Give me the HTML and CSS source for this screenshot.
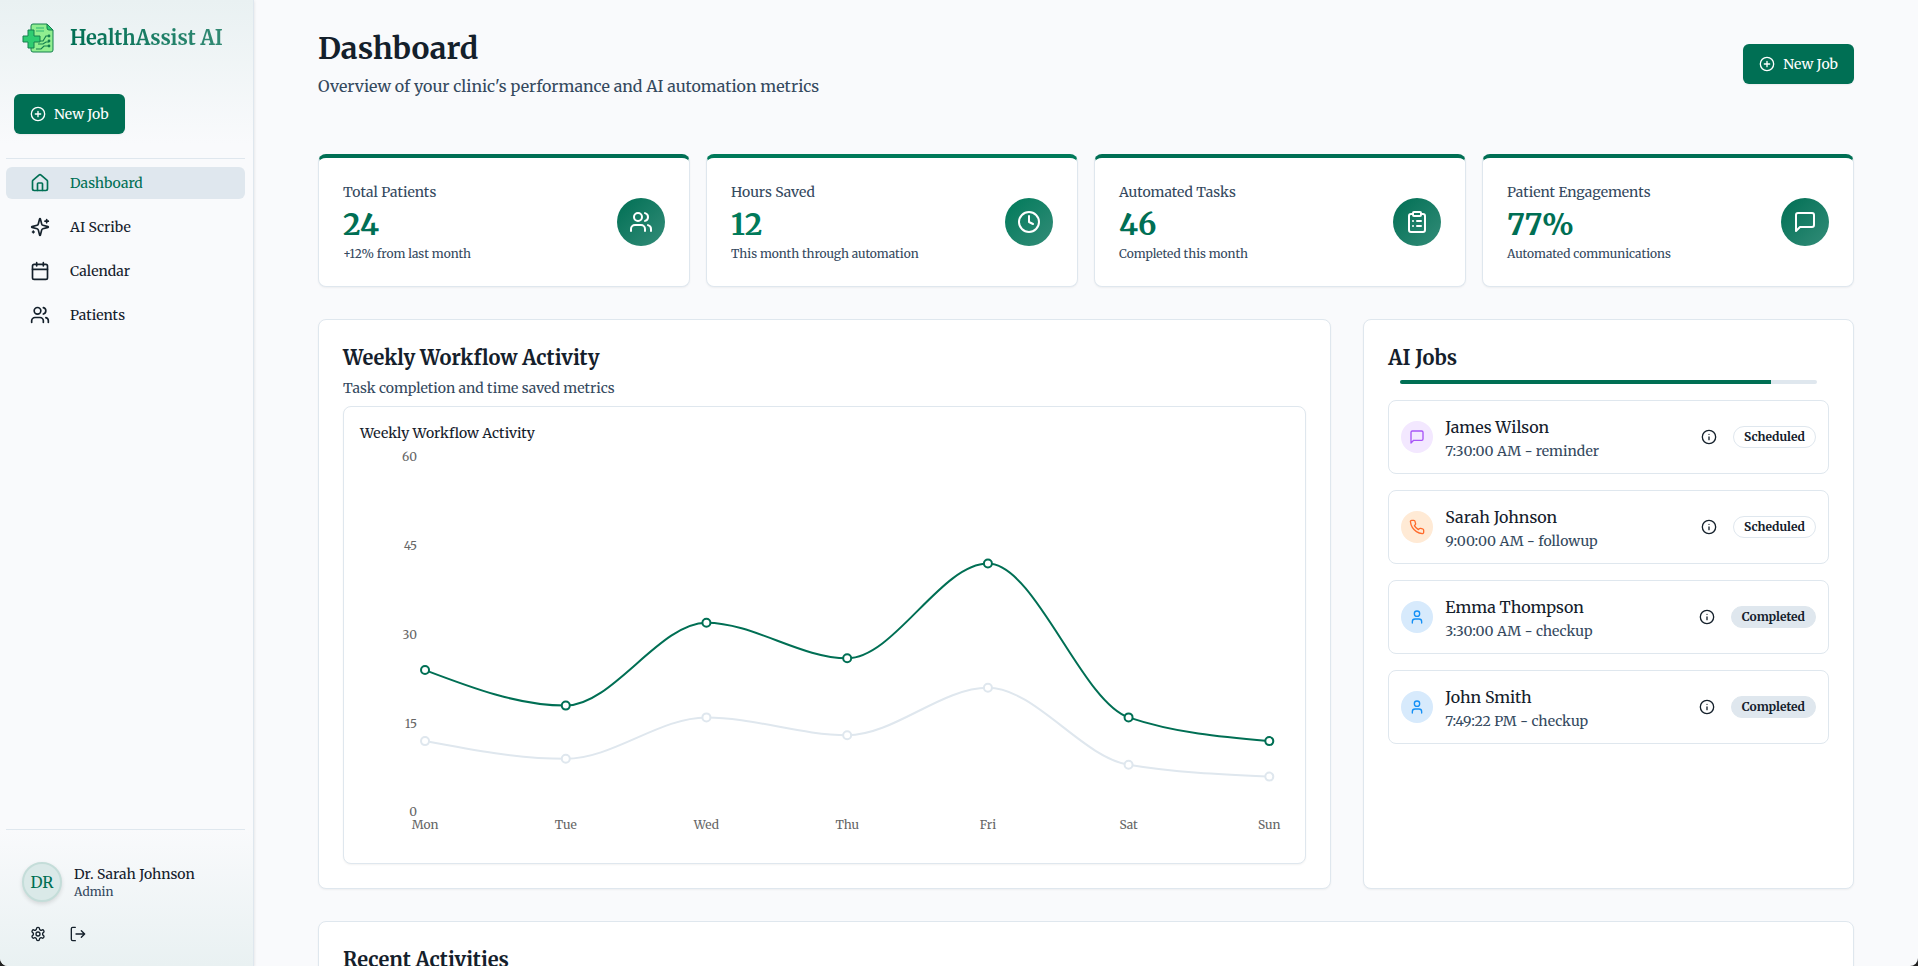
FILE: index.html
```html
<!DOCTYPE html>
<html lang="en">
<head>
  <meta charset="UTF-8">
  <meta name="viewport" content="width=device-width, initial-scale=1.0">
  <title>HealthAssist AI - Dashboard</title>
  <link rel="stylesheet" href="styles.css">
</head>
<body>
  <!-- icon sprite -->
  <svg class="sprite" aria-hidden="true">
    <symbol id="plus-circle" viewBox="0 0 24 24"><circle cx="12" cy="12" r="10"/><path d="M8 12h8M12 8v8"/></symbol>
    <symbol id="house" viewBox="0 0 24 24"><path d="M15 21v-8a1 1 0 0 0-1-1h-4a1 1 0 0 0-1 1v8"/><path d="M3 10a2 2 0 0 1 .709-1.528l7-5.999a2 2 0 0 1 2.582 0l7 5.999A2 2 0 0 1 21 10v9a2 2 0 0 1-2 2H5a2 2 0 0 1-2-2z"/></symbol>
    <symbol id="sparkles" viewBox="0 0 24 24"><path d="M9.937 15.5A2 2 0 0 0 8.5 14.063l-6.135-1.582a.5.5 0 0 1 0-.962L8.5 9.936A2 2 0 0 0 9.937 8.5l1.582-6.135a.5.5 0 0 1 .963 0L14.063 8.5A2 2 0 0 0 15.5 9.937l6.135 1.581a.5.5 0 0 1 0 .964L15.5 14.063a2 2 0 0 0-1.437 1.437l-1.582 6.135a.5.5 0 0 1-.963 0z"/><path d="M20 3v4M22 5h-4M4 17v2M5 18H3"/></symbol>
    <symbol id="calendar" viewBox="0 0 24 24"><path d="M8 2v4M16 2v4"/><rect width="18" height="18" x="3" y="4" rx="2"/><path d="M3 10h18"/></symbol>
    <symbol id="users" viewBox="0 0 24 24"><path d="M16 21v-2a4 4 0 0 0-4-4H6a4 4 0 0 0-4 4v2"/><circle cx="9" cy="7" r="4"/><path d="M22 21v-2a4 4 0 0 0-3-3.87M16 3.13a4 4 0 0 1 0 7.75"/></symbol>
    <symbol id="user" viewBox="0 0 24 24"><path d="M19 21v-2a4 4 0 0 0-4-4H9a4 4 0 0 0-4 4v2"/><circle cx="12" cy="7" r="4"/></symbol>
    <symbol id="clock" viewBox="0 0 24 24"><circle cx="12" cy="12" r="10"/><path d="M12 6v6l4 2"/></symbol>
    <symbol id="clipboard" viewBox="0 0 24 24"><rect width="8" height="4" x="8" y="2" rx="1"/><path d="M16 4h2a2 2 0 0 1 2 2v14a2 2 0 0 1-2 2H6a2 2 0 0 1-2-2V6a2 2 0 0 1 2-2h2M12 11h4M12 16h4M8 11h.01M8 16h.01"/></symbol>
    <symbol id="message" viewBox="0 0 24 24"><path d="M21 15a2 2 0 0 1-2 2H7l-4 4V5a2 2 0 0 1 2-2h14a2 2 0 0 1 2 2z"/></symbol>
    <symbol id="phone" viewBox="0 0 24 24"><path d="M22 16.92v3a2 2 0 0 1-2.18 2 19.79 19.79 0 0 1-8.63-3.07 19.5 19.5 0 0 1-6-6 19.79 19.79 0 0 1-3.07-8.67A2 2 0 0 1 4.11 2h3a2 2 0 0 1 2 1.72 12.84 12.84 0 0 0 .7 2.81 2 2 0 0 1-.45 2.11L8.09 9.91a16 16 0 0 0 6 6l1.27-1.27a2 2 0 0 1 2.11-.45 12.84 12.84 0 0 0 2.81.7A2 2 0 0 1 22 16.92z"/></symbol>
    <symbol id="info" viewBox="0 0 24 24"><circle cx="12" cy="12" r="10"/><path d="M12 16v-4M12 8h.01"/></symbol>
    <symbol id="settings" viewBox="0 0 24 24"><path d="M12.22 2h-.44a2 2 0 0 0-2 2v.18a2 2 0 0 1-1 1.73l-.43.25a2 2 0 0 1-2 0l-.15-.08a2 2 0 0 0-2.73.73l-.22.38a2 2 0 0 0 .73 2.73l.15.1a2 2 0 0 1 1 1.72v.51a2 2 0 0 1-1 1.74l-.15.09a2 2 0 0 0-.73 2.73l.22.38a2 2 0 0 0 2.73.73l.15-.08a2 2 0 0 1 2 0l.43.25a2 2 0 0 1 1 1.73V20a2 2 0 0 0 2 2h.44a2 2 0 0 0 2-2v-.18a2 2 0 0 1 1-1.73l.43-.25a2 2 0 0 1 2 0l.15.08a2 2 0 0 0 2.73-.73l.22-.39a2 2 0 0 0-.73-2.73l-.15-.08a2 2 0 0 1-1-1.74v-.5a2 2 0 0 1 1-1.74l.15-.09a2 2 0 0 0 .73-2.73l-.22-.38a2 2 0 0 0-2.73-.73l-.15.08a2 2 0 0 1-2 0l-.43-.25a2 2 0 0 1-1-1.73V4a2 2 0 0 0-2-2z"/><circle cx="12" cy="12" r="3"/></symbol>
    <symbol id="logout" viewBox="0 0 24 24"><path d="M8 22H4a2 2 0 0 1-2-2V4a2 2 0 0 1 2-2h4M17 17l5-5-5-5M22 12H9"/></symbol>
  </svg>

  <div class="app">
    <aside class="sidebar">
      <div class="sidebar-header">
        <div class="brand">
          <svg class="logo" viewBox="0 0 32 32" aria-hidden="true">
            <path d="M11 2h14l6 6v20a2 2 0 0 1-2 2H11a2 2 0 0 1-2-2V4a2 2 0 0 1 2-2z" fill="#90ee90" stroke="#14804f"/>
            <path d="M25 2v4a2 2 0 0 0 2 2h4z" fill="#2ecc71" stroke="#14804f"/>
            <path d="M14 6h8M14 9h8" fill="none" stroke="#2fb574" stroke-width="1.2"/>
            <path d="M18 19h3l3-5h3M16 22h5l3-2h3M14 27h5l3-3h5" fill="none" stroke="#14804f" stroke-width="1.2"/>
            <circle cx="27" cy="14" r="1.4" fill="#14804f"/><circle cx="27" cy="19" r="1.4" fill="#14804f"/><circle cx="27" cy="24" r="1.4" fill="#14804f"/>
            <path d="M6 8h6v6h6v6h-6v6H6v-6H1v-6h5z" fill="#2ecc71" stroke="#14804f"/>
          </svg>
          <span class="brand-name">HealthAssist AI</span>
        </div>
        <button class="btn" type="button"><svg class="icon"><use href="#plus-circle"/></svg>New Job</button>
      </div>

      <nav class="nav">
        <a class="nav-link active" href="#"><svg class="icon"><use href="#house"/></svg>Dashboard</a>
        <a class="nav-link" href="#"><svg class="icon"><use href="#sparkles"/></svg>AI Scribe</a>
        <a class="nav-link" href="#"><svg class="icon"><use href="#calendar"/></svg>Calendar</a>
        <a class="nav-link" href="#"><svg class="icon"><use href="#users"/></svg>Patients</a>
      </nav>

      <div class="sidebar-footer">
        <div class="profile">
          <div class="avatar">DR</div>
          <div>
            <div class="profile-name">Dr. Sarah Johnson</div>
            <div class="profile-role">Admin</div>
          </div>
        </div>
        <div class="profile-actions">
          <button class="icon-btn" type="button" aria-label="Settings"><svg class="icon"><use href="#settings"/></svg></button>
          <button class="icon-btn" type="button" aria-label="Log out"><svg class="icon"><use href="#logout"/></svg></button>
        </div>
      </div>
    </aside>

    <main class="main">
      <header class="page-header">
        <div>
          <h1>Dashboard</h1>
          <p>Overview of your clinic's performance and AI automation metrics</p>
        </div>
        <button class="btn" type="button"><svg class="icon"><use href="#plus-circle"/></svg>New Job</button>
      </header>

      <section class="stats">
        <div class="card stat">
          <div>
            <div class="stat-label">Total Patients</div>
            <div class="stat-value">24</div>
            <div class="stat-note">+12% from last month</div>
          </div>
          <div class="stat-icon"><svg class="icon"><use href="#users"/></svg></div>
        </div>
        <div class="card stat stat-light">
          <div>
            <div class="stat-label">Hours Saved</div>
            <div class="stat-value">12</div>
            <div class="stat-note">This month through automation</div>
          </div>
          <div class="stat-icon"><svg class="icon"><use href="#clock"/></svg></div>
        </div>
        <div class="card stat">
          <div>
            <div class="stat-label">Automated Tasks</div>
            <div class="stat-value">46</div>
            <div class="stat-note">Completed this month</div>
          </div>
          <div class="stat-icon"><svg class="icon"><use href="#clipboard"/></svg></div>
        </div>
        <div class="card stat">
          <div>
            <div class="stat-label">Patient Engagements</div>
            <div class="stat-value">77%</div>
            <div class="stat-note">Automated communications</div>
          </div>
          <div class="stat-icon"><svg class="icon"><use href="#message"/></svg></div>
        </div>
      </section>

      <section class="panels">
        <div class="card panel panel-wide">
          <h2>Weekly Workflow Activity</h2>
          <p class="panel-desc">Task completion and time saved metrics</p>
          <div class="card chart-box">
            <h3>Weekly Workflow Activity</h3>
            <svg class="chart" viewBox="0 0 929 404" role="img" aria-label="Weekly workflow line chart">
              <g class="axis axis-y">
                <text x="57" y="18">60</text>
                <text x="57" y="107">45</text>
                <text x="57" y="196">30</text>
                <text x="57" y="285">15</text>
                <text x="57" y="373">0</text>
              </g>
              <g class="axis axis-x">
                <text x="65" y="386">Mon</text>
                <text x="205.7" y="386">Tue</text>
                <text x="346.3" y="386">Wed</text>
                <text x="487" y="386">Thu</text>
                <text x="627.7" y="386">Fri</text>
                <text x="768.3" y="386">Sat</text>
                <text x="909" y="386">Sun</text>
              </g>
              <g class="series series-tasks">
                <path d="M65 227C111.9 244.8 158.8 262.5 205.7 262.5C252.6 262.5 299.4 179.7 346.3 179.7C393.2 179.7 440.1 215.2 487 215.2C533.9 215.2 580.8 120.5 627.7 120.5C674.6 120.5 721.4 258.5 768.3 274.3C815.2 290.1 862.1 294 909 298"/>
                <circle cx="65" cy="227" r="4"/><circle cx="205.7" cy="262.5" r="4"/><circle cx="346.3" cy="179.7" r="4"/><circle cx="487" cy="215.2" r="4"/><circle cx="627.7" cy="120.5" r="4"/><circle cx="768.3" cy="274.3" r="4"/><circle cx="909" cy="298" r="4"/>
              </g>
              <g class="series series-time">
                <path d="M65 298C111.9 306.9 158.8 315.7 205.7 315.7C252.6 315.7 299.4 274.3 346.3 274.3C393.2 274.3 440.1 292.1 487 292.1C533.9 292.1 580.8 244.7 627.7 244.7C674.6 244.7 721.4 313.8 768.3 321.7C815.2 329.6 862.1 331.5 909 333.5"/>
                <circle cx="65" cy="298" r="4"/><circle cx="205.7" cy="315.7" r="4"/><circle cx="346.3" cy="274.3" r="4"/><circle cx="487" cy="292.1" r="4"/><circle cx="627.7" cy="244.7" r="4"/><circle cx="768.3" cy="321.7" r="4"/><circle cx="909" cy="333.5" r="4"/>
              </g>
            </svg>
          </div>
        </div>

        <div class="card panel">
          <h2>AI Jobs</h2>
          <div class="progress"><div class="progress-bar" style="width: 89%"></div></div>
          <ul class="jobs">
            <li class="job">
              <span class="job-icon purple"><svg class="icon"><use href="#message"/></svg></span>
              <div class="job-text">
                <div class="job-name">James Wilson</div>
                <div class="job-time">7:30:00 AM - reminder</div>
              </div>
              <svg class="icon"><use href="#info"/></svg>
              <span class="badge">Scheduled</span>
            </li>
            <li class="job">
              <span class="job-icon orange"><svg class="icon"><use href="#phone"/></svg></span>
              <div class="job-text">
                <div class="job-name">Sarah Johnson</div>
                <div class="job-time">9:00:00 AM - followup</div>
              </div>
              <svg class="icon"><use href="#info"/></svg>
              <span class="badge">Scheduled</span>
            </li>
            <li class="job">
              <span class="job-icon blue"><svg class="icon"><use href="#user"/></svg></span>
              <div class="job-text">
                <div class="job-name">Emma Thompson</div>
                <div class="job-time">3:30:00 AM - checkup</div>
              </div>
              <svg class="icon"><use href="#info"/></svg>
              <span class="badge done">Completed</span>
            </li>
            <li class="job">
              <span class="job-icon blue"><svg class="icon"><use href="#user"/></svg></span>
              <div class="job-text">
                <div class="job-name">John Smith</div>
                <div class="job-time">7:49:22 PM - checkup</div>
              </div>
              <svg class="icon"><use href="#info"/></svg>
              <span class="badge done">Completed</span>
            </li>
          </ul>
        </div>
      </section>

      <section class="card panel">
        <h2>Recent Activities</h2>
      </section>
    </main>
  </div>
</body>
</html>
```
FILE: styles.css
```css
:root {
  --primary: #006f54;
  --text: #14202b;
  --muted: #34495e;
  --border: #dfe7ee;
  --bg: #f9fafc;
}
* {
  box-sizing: border-box;
}
html {
  background: #222;
}
body {
  margin: 0;
  font-family: Merriweather, "DejaVu Serif Condensed", "DejaVu Serif", serif;
  font-size: 14px;
  line-height: 20px;
  color: var(--text);
}
h1, h2, h3, p, ul {
  margin: 0;
  padding: 0;
}
.sprite {
  display: none;
}
.icon {
  width: 16px;
  height: 16px;
  flex-shrink: 0;
  fill: none;
  stroke: currentColor;
  stroke-width: 2;
  stroke-linecap: round;
  stroke-linejoin: round;
}
.app {
  display: flex;
  height: 100vh;
  overflow: hidden;
  background: var(--bg);
  border-radius: 0 0 8px 8px;
}

/* buttons */
.btn {
  display: inline-flex;
  align-items: center;
  gap: 8px;
  height: 40px;
  padding: 0 16px;
  border: none;
  border-radius: 6px;
  background: var(--primary);
  color: white;
  font: inherit;
  cursor: pointer;
  box-shadow: 0 1px 2px rgba(0,0,0,0.06);
}
.icon-btn {
  display: flex;
  padding: 8px;
  border: none;
  background: none;
  color: inherit;
  cursor: pointer;
}

/* sidebar */
.sidebar {
  display: flex;
  flex-direction: column;
  width: 254px;
  flex-shrink: 0;
  border-right: 1px solid var(--border);
  box-shadow: 0 1px 3px rgba(0,0,0,0.12);
}
.sidebar-header {
  padding: 22px 14px 24px;
  background: linear-gradient(to bottom, #e9f1f2, var(--bg) 144px);
}
.brand {
  display: flex;
  align-items: center;
  gap: 16px;
  height: 32px;
  margin-bottom: 40px;
  padding-left: 8px;
}
.logo {
  width: 32px;
  height: 32px;
}
.brand-name {
  font-size: 20px;
  font-weight: bold;
  line-height: 28px;
  background: linear-gradient(to right, var(--primary), #338a74);
  background-clip: text;
  -webkit-background-clip: text;
  color: transparent;
  white-space: nowrap;
}
.nav {
  display: flex;
  flex-direction: column;
  gap: 12px;
  flex: 1;
  margin: 0 8px 0 6px;
  padding-top: 8px;
  border-top: 1px solid var(--border);
}
.nav-link {
  display: flex;
  align-items: center;
  gap: 20px;
  height: 32px;
  padding-left: 24px;
  border-radius: 6px;
  color: var(--text);
  text-decoration: none;
}
.nav-link .icon {
  width: 20px;
  height: 20px;
}
.nav-link.active {
  background: var(--border);
  color: var(--primary);
}
.sidebar-footer {
  padding: 0 8px 16px 6px;
  background: linear-gradient(to bottom, var(--bg), #e9f1f2);
}
.profile {
  display: flex;
  align-items: center;
  gap: 12px;
  padding: 32px 16px 0;
  border-top: 1px solid var(--border);
}
.avatar {
  display: flex;
  align-items: center;
  justify-content: center;
  width: 40px;
  height: 40px;
  border: 2px solid #c4ddd9;
  border-radius: 50%;
  background: #dae9e8;
  color: var(--primary);
  font-size: 16px;
  box-shadow: 0 2px 4px rgba(0,0,0,0.12);
}
.profile-role {
  font-size: 12px;
  line-height: 16px;
  color: var(--muted);
}
.profile-actions {
  display: flex;
  gap: 8px;
  padding: 16px 16px 0;
}

/* main area */
.main {
  flex: 1;
  min-width: 0;
  padding: 30px 64px;
  overflow: hidden;
}
.page-header {
  display: flex;
  align-items: center;
  justify-content: space-between;
  margin-bottom: 56px;
}
.page-header h1 {
  margin-bottom: 8px;
  font-size: 30px;
  line-height: 36px;
}
.page-header p {
  font-size: 16px;
  line-height: 24px;
  color: var(--muted);
}
.card {
  border: 1px solid var(--border);
  border-radius: 8px;
  background: white;
  box-shadow: 0 1px 2px rgba(0,0,0,0.05);
}

.stats {
  display: grid;
  grid-template-columns: repeat(4, 1fr);
  gap: 16px;
  margin-bottom: 32px;
}
.stat {
  --tone: var(--primary);
  display: flex;
  align-items: center;
  justify-content: space-between;
  padding: 24px;
  border-top: 4px solid var(--tone);
}
.stat-light {
  --tone: #007a5a;
}
.stat-label {
  color: var(--muted);
}
.stat-value {
  margin: 4px 0;
  font-size: 30px;
  font-weight: bold;
  line-height: 36px;
  color: var(--tone);
}
.stat-note {
  font-size: 12px;
  line-height: 16px;
  color: var(--muted);
}
.stat-icon {
  display: flex;
  align-items: center;
  justify-content: center;
  width: 48px;
  height: 48px;
  border-radius: 50%;
  background: linear-gradient(to bottom right, var(--tone), #338c78);
  color: white;
}
.stat-icon .icon {
  width: 24px;
  height: 24px;
}

.panels {
  display: grid;
  grid-template-columns: repeat(3, 1fr);
  gap: 32px;
  margin-bottom: 32px;
}
.panel {
  padding: 24px;
}
.panel-wide {
  grid-column: span 2;
}
.panel h2 {
  font-size: 20px;
  line-height: 28px;
}
.panel-desc {
  margin: 6px 0 8px;
  color: var(--muted);
}
.chart-box {
  padding: 16px;
}
.chart-box h3 {
  font-size: 14px;
  font-weight: normal;
}
.chart {
  display: block;
  width: 100%;
}
.axis {
  font-size: 12px;
  fill: #666;
}
.axis-y {
  text-anchor: end;
}
.axis-x {
  text-anchor: middle;
}
.series {
  fill: white;
  stroke-width: 2;
}
.series path {
  fill: none;
}
.series-tasks {
  stroke: var(--primary);
}
.series-time {
  stroke: var(--border);
}

/* AI jobs */
.progress {
  height: 4px;
  margin: 8px 12px 16px;
  border-radius: 4px;
  background: var(--border);
  overflow: hidden;
}
.progress-bar {
  height: 100%;
  background: var(--primary);
}
.jobs {
  display: grid;
  gap: 16px;
  list-style: none;
}
.job {
  display: flex;
  align-items: center;
  gap: 16px;
  padding: 12px;
  border: 1px solid var(--border);
  border-radius: 8px;
}
.job-icon {
  display: flex;
  align-items: center;
  justify-content: center;
  width: 32px;
  height: 32px;
  margin-right: -4px;
  border-radius: 50%;
}
.job-text {
  flex: 1;
}
.job-name {
  font-size: 16px;
  line-height: 28px;
}
.job-time {
  color: var(--muted);
}
.purple {
  background: #f3e8ff;
  color: #a855f7;
}
.orange {
  background: #ffead5;
  color: #ff6b2c;
}
.blue {
  background: #d7eafc;
  color: #1590f5;
}
.badge {
  padding: 2px 10px;
  border: 1px solid var(--border);
  border-radius: 11px;
  font-size: 12px;
  font-weight: bold;
  line-height: 16px;
}
.badge.done {
  background: var(--border);
}
```
